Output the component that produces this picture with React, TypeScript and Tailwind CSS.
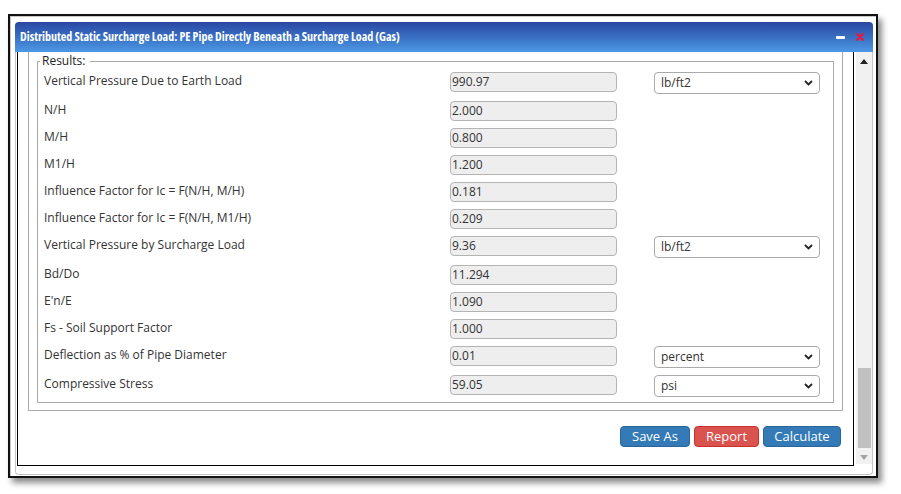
import React from 'react';

type Row = { label: string; value: string; unit?: string };

const rows: Row[] = [
  { label: 'Vertical Pressure Due to Earth Load', value: '990.97', unit: 'lb/ft2' },
  { label: 'N/H', value: '2.000' },
  { label: 'M/H', value: '0.800' },
  { label: 'M1/H', value: '1.200' },
  { label: 'Influence Factor for Ic = F(N/H, M/H)', value: '0.181' },
  { label: 'Influence Factor for Ic = F(N/H, M1/H)', value: '0.209' },
  { label: 'Vertical Pressure by Surcharge Load', value: '9.36', unit: 'lb/ft2' },
  { label: 'Bd/Do', value: '11.294' },
  { label: "E'n/E", value: '1.090' },
  { label: 'Fs - Soil Support Factor', value: '1.000' },
  { label: 'Deflection as % of Pipe Diameter', value: '0.01', unit: 'percent' },
  { label: 'Compressive Stress', value: '59.05', unit: 'psi' },
];

const Chevron = () => (
  <svg width="9" height="6" viewBox="0 0 9 6" className="text-[#222]">
    <path d="M1 1 L4.5 4.5 L8 1" fill="none" stroke="currentColor" strokeWidth="1.8" />
  </svg>
);

const ResultRow: React.FC<{ row: Row }> = ({ row }) => (
  <div className="flex items-start">
    <div className="w-[406px] text-[12px] leading-[18px] text-[#333]">{row.label}</div>
    <div className="w-[167px] h-[20px] border border-[#b4b4b4] rounded-[4px] bg-[#eeeeee] pl-[1px] text-[12px] leading-[18px] text-[#333]">
      {row.value}
    </div>
    {row.unit && (
      <div className="ml-[37px] w-[166px] h-[22px] border border-[#aaaaaa] rounded-[4px] bg-white flex items-center justify-between pl-[6px] pr-[6px] text-[12px] text-[#333]">
        <span>{row.unit}</span>
        <Chevron />
      </div>
    )}
  </div>
);

export default function App() {
  return (
    <div className="w-[901px] h-[494px] bg-white overflow-hidden pt-[14px] pl-[8px] font-['Open_Sans',sans-serif]">
      {/* outer window frame */}
      <div className="w-[870px] h-[464px] border-2 border-[#111] shadow-[4px_5px_6px_rgba(0,0,0,0.45)] bg-white">
        <div className="h-full border-t border-l border-[#c8c8c8] pl-[4px] pt-[5px]">
          {/* dialog */}
          <div className="w-[858px] h-[453px] rounded-[4px] border-x border-b border-[#c4c4c4] bg-white flex flex-col">
            <div className="h-[30px] -mx-[1px] rounded-t-[4px] bg-gradient-to-b from-[#2a47a2] to-[#4c98e4] flex items-center justify-between pl-[5px] pr-[9px]">
              <span className="text-white font-bold text-[12px] [font-stretch:condensed] whitespace-nowrap">
                Distributed Static Surcharge Load: PE Pipe Directly Beneath a Surcharge Load (Gas)
              </span>
              <div className="flex items-center gap-[11px]">
                <div className="w-[9px] h-[3px] rounded-[1px] bg-white" />
                <svg width="8" height="8" viewBox="0 0 8 8">
                  <path d="M1 1 L7 7 M7 1 L1 7" stroke="#f0163a" strokeWidth="2.2" strokeLinecap="round" />
                </svg>
              </div>
            </div>

            <div className="flex items-start pl-[1px]">
              {/* scrolled content */}
              <div className="w-[837px] h-[414px] border-x border-b border-black">
                <div className="ml-[10px] w-[815px] border-x border-b border-[#aaaaaa] pt-[1px] px-[8px] pb-[7px]">
                  <fieldset className="border border-[#aaaaaa] pl-[6px] pt-[3px] pb-[5px]">
                    <legend className="-ml-[4px] pl-[2px] pr-[5px] text-[12px] leading-[16px] text-[#222]">Results:</legend>
                    <div className="flex flex-col gap-[7px]">
                      {rows.map((r) => (
                        <ResultRow key={r.label} row={r} />
                      ))}
                    </div>
                  </fieldset>
                </div>
                <div className="flex justify-end gap-[4px] mt-[15px] pr-[12px] text-[13px] text-white">
                  <button className="w-[70px] h-[21px] rounded-[4px] bg-[#337ab7] border border-[#2a649a] leading-[19px]">Save As</button>
                  <button className="w-[65px] h-[21px] rounded-[4px] bg-[#d9534f] border border-[#c9302c] leading-[19px]">Report</button>
                  <button className="w-[78px] h-[21px] rounded-[4px] bg-[#337ab7] border border-[#2a649a] leading-[19px]">Calculate</button>
                </div>
              </div>

              {/* scrollbar */}
              <div className="ml-[2px] w-[16px] h-[412px] bg-[#f1f1f1] flex flex-col items-center">
                <svg width="8" height="5" viewBox="0 0 8 5" className="mt-[7px]">
                  <path d="M0 5 L4 0 L8 5 Z" fill="#222" />
                </svg>
                <div className="mt-[304px] w-[13px] h-[80px] bg-[#c1c1c1]" />
                <svg width="8" height="5" viewBox="0 0 8 5" className="mt-[7px]">
                  <path d="M0 0 L8 0 L4 5 Z" fill="#a3a3a3" />
                </svg>
              </div>
            </div>
          </div>
        </div>
      </div>
    </div>
  );
}
